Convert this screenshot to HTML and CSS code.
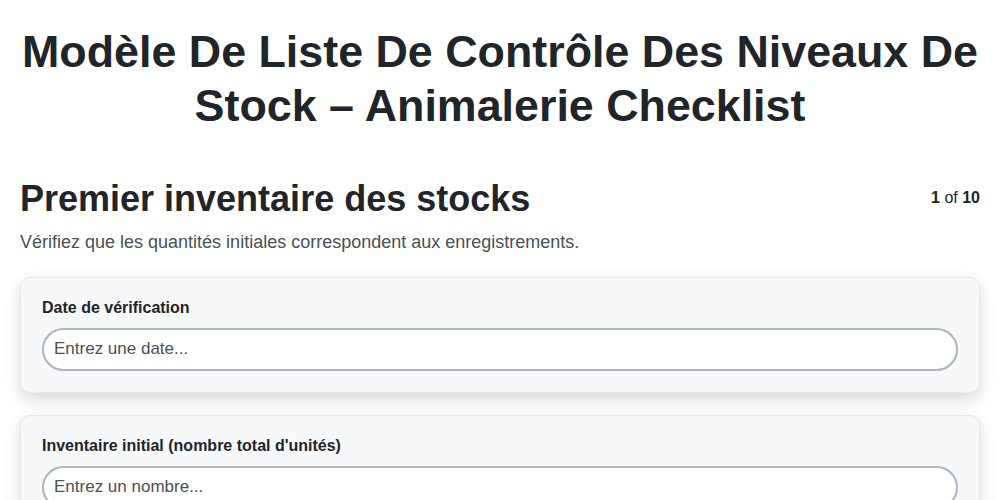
FILE: index.html
```html
<!DOCTYPE html>
<html lang="fr">
<head>
  <meta charset="UTF-8" />
  <meta name="viewport" content="width=device-width, initial-scale=1.0"/>
  <title>Modèle De Liste De Contrôle Des Niveaux De Stock – Animalerie Checklist</title>
  <link rel="stylesheet" href="styles.css">
</head>
<body>
  <h1 class="page-title">Modèle De Liste De Contrôle Des Niveaux De Stock – Animalerie Checklist</h1>

  <div class="section-head">
    <h2>Premier inventaire des stocks</h2>
    <span class="step"><b>1</b> of <b>10</b></span>
  </div>
  <p class="section-desc">Vérifiez que les quantités initiales correspondent aux enregistrements.</p>

  <div class="card">
    <label for="date">Date de vérification</label>
    <input type="text" id="date" placeholder="Entrez une date..." />
  </div>

  <div class="card">
    <label for="units">Inventaire initial (nombre total d'unités)</label>
    <input type="text" id="units" placeholder="Entrez un nombre..." />
  </div>

  <div class="card">
    <label for="notes">Remarques</label>
    <input type="text" id="notes" placeholder="Entrez du texte..." />
  </div>
</body>
</html>
```

FILE: styles.css
```css
* {
  box-sizing: border-box;
  font-family: 'Liberation Sans', Arial, sans-serif;
}

body {
  background: #fff;
  color: #212529;
  margin: 0;
  padding: 25px 20px 40px;
}

.page-title {
  font-size: 44.8px;
  line-height: 1.2;
  font-weight: bold;
  text-align: center;
  margin: 0 -4px 44px;
}

.section-head {
  display: flex;
  align-items: center;
  justify-content: space-between;
}

.section-head h2 {
  font-size: 36px;
  line-height: 1.2;
  margin: 0;
}

.step {
  font-size: 16px;
}

.section-desc {
  font-size: 18px;
  line-height: 27px;
  color: #495057;
  margin: 9px 0 21px;
}

.card {
  background: #f7f8fa;
  border: 1px solid #e6e8eb;
  border-radius: 10px;
  padding: 20px 21px 21px;
  margin-bottom: 22px;
  box-shadow: 0 6px 16px rgba(0,0,0,0.16);
}

label {
  display: block;
  font-size: 16px;
  line-height: 19px;
  font-weight: bold;
  margin-bottom: 11px;
}

input[type="text"] {
  display: block;
  width: 100%;
  height: 43px;
  padding: 0 10px;
  border: 2px solid #adb5bd;
  border-radius: 22px;
  background: #fff;
  font-size: 17px;
  color: #212529;
}

input::placeholder {
  color: #495057;
}
```
